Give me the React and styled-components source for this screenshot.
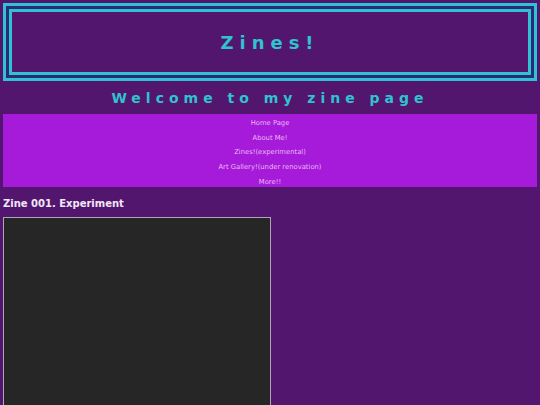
import styled, { createGlobalStyle } from "styled-components";

const GlobalStyle = createGlobalStyle`
  html, body {
    margin: 0;
    background: #52166e;
  }
  body {
    padding: 3px;
    font-family: "DejaVu Sans", Verdana, sans-serif;
  }
`;

const navLinks = [
  "Home Page",
  "About Me!",
  "Zines!(experimental)",
  "Art Gallery!(under renovation)",
  "More!!",
];

const App = () => {
  return (
    <>
      <GlobalStyle />
      <Header>
        <TitleBox>
          <h1>Zines!</h1>
        </TitleBox>
      </Header>
      <Welcome>Welcome to my zine page</Welcome>
      <Nav>
        {navLinks.map((link) => (
          <NavLink key={link} href="#">
            {link}
          </NavLink>
        ))}
      </Nav>
      <Zine>
        <h2>Zine 001. Experiment</h2>
        <Viewer />
      </Zine>
    </>
  );
};

export default App;

const Header = styled.header`
  border: 3px solid #2fc3d0;
  background: #2b2a7c;
  padding: 3px;
`;

const TitleBox = styled.div`
  border: 3px solid #2fc3d0;
  background: #52166e;
  height: 60px;
  display: flex;
  align-items: center;
  justify-content: center;
  h1 {
    margin: 0;
    font-size: 18px;
    font-weight: bold;
    letter-spacing: 6px;
    color: #2fc3d0;
  }
`;

const Welcome = styled.h2`
  margin: 7px 0 6px;
  text-align: center;
  font-size: 14px;
  font-weight: bold;
  letter-spacing: 5px;
  color: #2fc3d0;
  line-height: 20px;
`;

const Nav = styled.nav`
  background: #a51bd9;
  display: flex;
  flex-direction: column;
  align-items: center;
  padding: 2px 0 0;
  height: 73px;
  box-sizing: border-box;
`;

const NavLink = styled.a`
  font-size: 6.8px;
  line-height: 14.7px;
  color: #eab8f6;
  text-decoration: none;
`;

const Zine = styled.section`
  h2 {
    margin: 9px 0 6px;
    font-size: 10px;
    line-height: 15px;
    font-weight: bold;
    color: #f3e6f6;
  }
`;

const Viewer = styled.div`
  width: 266px;
  height: 200px;
  background: #262626;
  border: 1px solid #b3a3b8;
`;
